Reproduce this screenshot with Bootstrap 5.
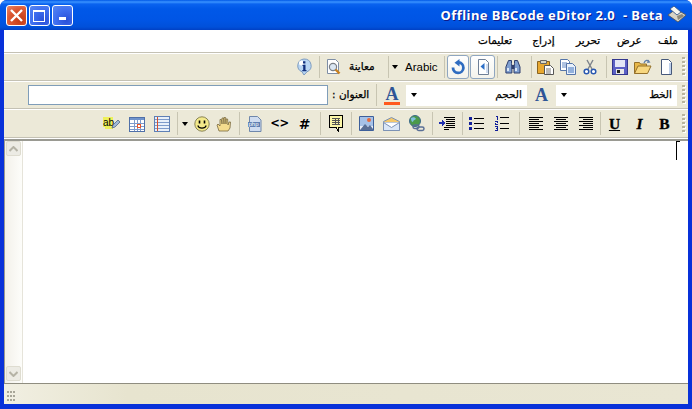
<!DOCTYPE html>
<html lang="ar">
<head>
<meta charset="utf-8">
<title>Offline BBCode eDitor 2.0</title>
<link href="https://cdn.jsdelivr.net/npm/bootstrap@5.3.0/dist/css/bootstrap.min.css" rel="stylesheet">
<style>
html,body{margin:0;height:409px;overflow:hidden;background:#fff}
.xpwin{width:692px;height:409px;direction:ltr;background:#0831d9;border-radius:7px 7px 0 0;overflow:hidden;font-family:"DejaVu Sans",sans-serif;color:#000}
.xptitle{height:30px;padding:0 6px 0 6px;background:linear-gradient(#0058e6 0,#3a93ff 2px,#0a63ef 4px,#0058e8 9px,#0055e5 20px,#0050da 27px,#0040c4 30px)}
.xpbtn{width:21px;height:21px;border:1px solid #fff;border-radius:3px;margin-right:2px;background:radial-gradient(circle at 70% 75%,#2a50d8,#3f6ff0 55%,#5a88f0)}
.xpbtn.xclose{background:radial-gradient(circle at 70% 75%,#c33a14,#dd5a35 60%,#e88b6c)}
.xpname{font:bold 13px "Noto Sans",sans-serif;color:#fff;text-shadow:1px 1px 0 #0f1b89;white-space:pre;margin-right:5px;letter-spacing:.45px}
.xpbody{margin:0 4px 0 4px;height:374px;background:#ece9d8}
.xpmenu{height:23px;background:#fff;border-bottom:1px solid #c4c1b4;padding-right:10px;font-size:10.5px;font-weight:400;-webkit-text-stroke:.25px #000;direction:ltr}
.mi1{width:46px;text-align:center}.mi2{width:51px;text-align:center}.mi3{width:38px;text-align:center}.mi4{width:45px;text-align:center}.mi5{width:26px;text-align:right}
.xptool{height:28px;background:#ece9d8;border-top:1px solid #fff;border-bottom:1px solid #c4c1b4}
.xptool.tall{height:29px}
.cell{flex:none;height:100%}
.w10{width:10px}.w14{width:12px}.w21{width:21px}.w22{width:22px}.w23{width:23px}.w24{width:24px}.w25{width:25px}.w28{width:28px}.w29{width:29px}
.sepc{flex:none;align-self:stretch;position:relative}
.sepc::before{content:"";position:absolute;top:2px;bottom:2px;left:50%;width:1px;background:#c8c5b2}
.s4{width:4px}.s5{width:5px}.s6{width:6px}.s7{width:7px}.s9{width:9px}
.grip{flex:none;width:11px;height:100%;padding-left:5px}
.grip i{display:block;width:3px;height:2px;margin-bottom:2px;background:#b8b49e;box-shadow:1px 1px 0 #fff}
.tri{width:0;height:0;border:3.5px solid transparent;border-top:4px solid #000;border-bottom:0}
.hotb{flex:none;height:24px;border:1px solid #8fa6c0;border-radius:3px;background:linear-gradient(#fff,#f4f3ec)}
.hw1{width:22px;margin-left:1px}.hw2{width:25px;margin-left:1px}
.prevb{width:64px;padding-left:4px;gap:6px}
.lbl{font-size:10.5px;-webkit-text-stroke:.25px #000;white-space:nowrap}
.arab{width:41px;padding-left:5px;font:11.5px "Liberation Sans",sans-serif}
.inpt{flex:none;width:300px;height:20px;border:1px solid #7f9db9;background:#fff;margin-right:2px}
.lblw{width:44px;padding-left:2px}
.ddn{flex:none;height:21px;background:#fff;padding:0 5px}
.ddw{width:121px}
.tletter{font:bold 18px/1 "Liberation Serif",serif;color:#2f5596}
.colorbar{width:16px;height:3px;background:#ff5a1f;margin-top:-1px}
.biu{font:bold 15.5px/1 "Liberation Serif",serif;-webkit-text-stroke:.3px #000}
.code{font:bold 14px/1 "DejaVu Sans",sans-serif;text-shadow:0 0 2px #fff}
.codeb{font:bold 11.5px/1 "DejaVu Sans",sans-serif;letter-spacing:-.5px;text-shadow:0 0 2px #fff}
.xpedit{height:245px;border-top:1px solid #fff;background:#fff}
.edinner{height:100%;border-top:2px solid #9a9a92;border-left:1px solid #9a9a92;border-bottom:0}
.sbar{flex:none;width:18px;height:100%;background:linear-gradient(90deg,#f3f1ea,#fdfdfa);border-right:1px solid #e6e4da;padding:0 1px 2px}
.sbtn{width:15px;height:15px;background:#ecebe4;border:1px solid #dedcd0;border-radius:2px}
.pane{flex:1;padding:0 9px 0 0}
.caretx{width:3px;height:19px;border-left:1.5px solid #000;position:relative}
.caretx::before{content:"";position:absolute;left:0;top:0;width:3px;height:1px;background:#000}
.xpstat{height:21px;border-top:1px solid #8f8d80;background:linear-gradient(90deg,#f1efe2,#e7e4cf 18%,#e9e6d3);padding:7px 0 0 3px}
.dots{width:9px;height:11px;background:radial-gradient(circle at 1px 1px,#a8a698 1px,transparent 1.2px) 0 0/3px 4px}
svg{display:block}
</style>
</head>
<body>
<div class="xpwin d-flex flex-column">
  <div class="xptitle d-flex align-items-center">
    <div class="xpbtn xclose d-flex align-items-center justify-content-center"><svg width="15" height="15" viewBox="0 0 15 15"><path d="M2 2l11 11M13 2L2 13" stroke="#fff" stroke-width="2.4"/></svg></div>
    <div class="xpbtn d-flex align-items-center justify-content-center"><svg width="13" height="13" viewBox="0 0 13 13" shape-rendering="crispEdges"><path d="M.5 2.5h11v10H.5z" fill="none" stroke="#fff"/><path d="M0 .5h12v2H0z" fill="#fff"/></svg></div>
    <div class="xpbtn d-flex align-items-end justify-content-center pb-1"><svg width="8" height="4" viewBox="0 0 8 4"><path d="M0 0h7v3H0z" fill="#fff"/></svg></div>
    <div class="flex-grow-1"></div>
    <span class="xpname">Offline BBCode eDitor 2.0  - Beta</span>
    <svg width="18" height="18" viewBox="0 0 18 18"><path d="M0 9l8-6 10 6-8 7z" fill="#d8d4c6" stroke="#55524a" stroke-width=".8"/><path d="M2 3l4-3 7 6-4 3z" fill="#f6f6f0" stroke="#34568a" stroke-width=".9"/><path d="M9 10l5-2 2 2-6 4z" fill="#8c8878"/></svg>
  </div>
  <div class="xpbody">
    <div class="xpmenu d-flex align-items-center justify-content-end">
      <span class="mi1">تعليمات</span><span class="mi2">إدراج</span><span class="mi3">تحرير</span><span class="mi4">عرض</span><span class="mi5">ملف</span>
    </div>

    <div class="xptool d-flex justify-content-end align-items-center">
      <div class="cell w24 d-flex align-items-center justify-content-center"><svg width="18" height="18" viewBox="0 0 18 18"><path d="M9 1a7 6.7 0 0 1 3 12.800L9 17l-2-3.200A7 6.700 0 0 1 9 1z" fill="#b9d6f3" stroke="#7e9cc0"/><circle cx="6.500" cy="5" r="2.500" fill="#fff"/><path d="M8 3.200h2.400v2.200H8zM7.500 6.800h3V12H11.500v1.200H7.300V12h.9V8h-.7z" fill="#12307d"/></svg></div>
      <div class="sepc s5"></div>
      <div class="cell prevb d-flex align-items-center"><svg width="18" height="18" viewBox="0 0 18 18"><path d="M2.500 1.500h8l3 3v11h-11z" fill="#fff" stroke="#7e8ea5"/><circle cx="8" cy="9" r="3.600" fill="#dbe7f3" stroke="#7a7f86" stroke-width="1.200"/><path d="M10.500 11.500l4 4" stroke="#c9801f" stroke-width="2.400"/></svg><span class="lbl">معاينة</span></div>
      <div class="sepc s5"></div>
      <div class="cell w10 d-flex align-items-center justify-content-center"><div class="tri"></div></div>
      <div class="cell arab d-flex align-items-center">Arabic</div>
      <div class="sepc s5"></div>
      <div class="hotb hw1 d-flex align-items-center justify-content-center"><svg width="16" height="16" viewBox="0 0 16 16"><path d="M3 8.500A5.200 5.200 0 1 0 8.500 3.500" fill="none" stroke="#2f6cc0" stroke-width="2.800"/><path d="M9.500 0v7.500L4.500 3.700z" fill="#2f6cc0"/></svg></div>
      <div class="hotb hw2 d-flex align-items-center justify-content-center"><svg width="16" height="16" viewBox="0 0 16 16"><path d="M3.500 .5h7l3 3v12h-10z" fill="#fff" stroke="#6e7f96"/><path d="M11 5h2v9h-2z" fill="#cfdcef"/><path d="M9.500 4v7L5.500 7.500z" fill="#2d70c8"/></svg></div>
      <div class="sepc s4"></div>
      <div class="cell w28 d-flex align-items-center justify-content-center"><svg width="16" height="16" viewBox="0 0 16 16"><path d="M3.500 1.500h3v3l.4 3V14h-6V8z M9.500 1.500h3l2.500 6.500v6H9V7.500l.5-3z" fill="#7f9fd0" stroke="#2e3f6e"/><path d="M6.500 6h3v4h-3z" fill="#2e3f6e"/><path d="M2 9h2v3H2zM10 9h2v3h-2z" fill="#dbe7f5"/></svg></div>
      <div class="sepc s7"></div>
      <div class="cell w23 d-flex align-items-center justify-content-center"><svg width="18" height="17" viewBox="0 0 18 17"><path d="M.5 2.500h12v12H.5z" fill="#e8a830" stroke="#8a6420"/><path d="M3.500 1.500h6v3h-6z" fill="#d8d8c8" stroke="#666"/><path d="M7.500 6.500h6l3 3v6h-9z" fill="#fff" stroke="#555"/><path d="M9 10h5M9 12h5M9 14h5" stroke="#777"/></svg></div>
      <div class="cell w21 d-flex align-items-center justify-content-center"><svg width="16" height="16" viewBox="0 0 16 16"><path d="M.5 .5h7l2 2v9h-9z" fill="#fff" stroke="#5574a8"/><path d="M2 4h5M2 6h5M2 8h5" stroke="#5f86c5"/><path d="M6.500 4.500h6l3 3v8h-9z" fill="#e9f1fb" stroke="#5574a8"/><path d="M8 9h6M8 11h6M8 13h6" stroke="#3d70bd"/></svg></div>
      <div class="cell w24 d-flex align-items-center justify-content-center"><svg width="16" height="16" viewBox="0 0 16 16"><path d="M5 1l5 9M11 1L6 10" stroke="#7d828a" stroke-width="1.400" fill="none"/><circle cx="4.500" cy="12.500" r="2.300" fill="#fff" stroke="#2a58b0" stroke-width="1.500"/><circle cx="11.500" cy="12.500" r="2.300" fill="#fff" stroke="#2a58b0" stroke-width="1.500"/></svg></div>
      <div class="sepc s7"></div>
      <div class="cell w22 d-flex align-items-center justify-content-center"><svg width="16" height="16" viewBox="0 0 16 16" shape-rendering="crispEdges"><path d="M.5 .5h15v15H.5z" fill="#5b60c4" stroke="#34378e"/><path d="M3 1h10v7H3z" fill="#e3e6f6"/><path d="M4 10h8v5H4z" fill="#e8e8e8"/><path d="M5 11h3v3H5z" fill="#222"/></svg></div>
      <div class="cell w24 d-flex align-items-center justify-content-center"><svg width="18" height="16" viewBox="0 0 18 16"><path d="M.5 14.500v-11h5l1 1.500h6v2.500" fill="#e8b84a" stroke="#94702a"/><path d="M.5 14.500L4 7h13l-3.500 7.500z" fill="#f7d77f" stroke="#94702a"/><path d="M10 4c1-3 4-3.500 5-1.500" fill="none" stroke="#5f7da8" stroke-width="1.200"/><path d="M14 .5l2.500 3-3.500.5z" fill="#5f7da8"/></svg></div>
      <div class="cell w22 d-flex align-items-center justify-content-center"><svg width="16" height="16" viewBox="0 0 16 16"><path d="M3.500 .5h7l3 3v12h-10z" fill="#fff" stroke="#46587a"/><path d="M11 4h2v11h-2z" fill="#bfd0ea"/></svg></div>
      <div class="grip d-flex flex-column justify-content-center"><i></i><i></i><i></i><i></i><i></i></div>
    </div>

    <div class="xptool d-flex justify-content-end align-items-center">
      <div class="inpt"></div>
      <div class="cell lblw d-flex align-items-center"><span class="lbl" dir="rtl">العنوان :</span></div>
      <div class="sepc s4"></div>
      <div class="cell w28 d-flex flex-column align-items-center justify-content-center"><span class="tletter">A</span><div class="colorbar"></div></div>
      <div class="ddn ddw d-flex align-items-center justify-content-between"><div class="tri"></div><span class="lbl">الحجم</span></div>
      <div class="cell w29 d-flex align-items-center justify-content-center"><span class="tletter">A</span></div>
      <div class="ddn ddw d-flex align-items-center justify-content-between"><div class="tri"></div><span class="lbl">الخط</span></div>
      <div class="grip d-flex flex-column justify-content-center"><i></i><i></i><i></i><i></i><i></i></div>
    </div>

    <div class="xptool tall d-flex justify-content-end align-items-center">
      <div class="cell w25 d-flex align-items-center justify-content-center"><svg width="17" height="16" viewBox="0 0 17 16"><path d="M0 1h10v12H2V11H0z" fill="#eef05a"/><text x="0" y="10" font-family="Liberation Sans" font-size="10">ab</text><path d="M9 12l1-3 5-5 2 2-5 5z" fill="#9fb8d8" stroke="#445a7a" stroke-width=".7"/></svg></div>
      <div class="cell w25 d-flex align-items-center justify-content-center"><svg width="16" height="16" viewBox="0 0 16 16" shape-rendering="crispEdges"><path d="M.5 1.500h15v14H.5z" fill="#fff" stroke="#5070a8"/><path d="M1 2h14v2H1z" fill="#6f93cc"/><path d="M1 7h14M1 10h14M1 13h14M5 4v11M8 4v11M11 4v11" stroke="#7d9bcb"/><path d="M8.500 8.500h3v3h-3z" fill="#fff" stroke="#e8562a"/></svg></div>
      <div class="cell w25 d-flex align-items-center justify-content-center"><svg width="16" height="16" viewBox="0 0 16 16" shape-rendering="crispEdges"><path d="M.5 .5h15v15H.5z" fill="#e8f0fa" stroke="#5f80b5"/><path d="M1 3h14M1 6h14M1 9h14M1 12h14" stroke="#7d9bcb"/><path d="M3.500 1v14" stroke="#d8502a"/></svg></div>
      <div class="sepc s5"></div>
      <div class="cell w14 d-flex align-items-center justify-content-center"><div class="tri"></div></div>
      <div class="cell w22 d-flex align-items-center justify-content-center"><svg width="16" height="16" viewBox="0 0 16 16"><circle cx="8" cy="8" r="7.200" fill="#f3e98a" stroke="#8a8558"/><path d="M5.500 4.500v3M10.500 4.500v3" stroke="#000" stroke-width="1.600"/><path d="M3.800 9.500c1 3.500 7.400 3.500 8.400 0" fill="none" stroke="#000" stroke-width="1.100"/></svg></div>
      <div class="cell w22 d-flex align-items-center justify-content-center"><svg width="16" height="16" viewBox="0 0 16 16"><path d="M3 15L1 9l1-1 2 2V3.500h1.400L6 8V2h1.600L8 8V1.500h1.600L10 8V3h1.600l.4 6 1-3h1.500L14 12l-2 3z" fill="#f5dc8e" stroke="#7a6a40" stroke-width=".8"/></svg></div>
      <div class="sepc s7"></div>
      <div class="cell w25 d-flex align-items-center justify-content-center"><svg width="14" height="16" viewBox="0 0 14 16"><path d="M1.500 .5h8l3.500 3.500v11.500h-11.500z" fill="#cfdcf0" stroke="#6f87ab"/><path d="M0 6h12v5H0z" fill="#5f7fb3"/><text x="0.500" y="10.300" font-family="Liberation Sans" font-size="6" fill="#fff">php</text></svg></div>
      <div class="cell w25 d-flex align-items-center justify-content-center"><span class="codeb">&lt;&gt;</span></div>
      <div class="cell w25 d-flex align-items-center justify-content-center"><span class="code">#</span></div>
      <div class="sepc s6"></div>
      <div class="cell w25 d-flex align-items-center justify-content-center"><svg width="14" height="17" viewBox="0 0 14 17" shape-rendering="crispEdges"><path d="M.5 .5h13v12H9v3l-2-3H.5z" fill="#fbf6a8" stroke="#000"/><path d="M3 3h8M3 5h8M3 7h8M3 9h8M6 3v7M9 3v7" stroke="#555"/></svg></div>
      <div class="sepc s6"></div>
      <div class="cell w25 d-flex align-items-center justify-content-center"><svg width="15" height="15" viewBox="0 0 15 15"><path d="M.5 .5h14v14H.5z" fill="#e9eef8" stroke="#3d5f9a"/><path d="M1 1h13v9H1z" fill="#a7c2e8"/><path d="M1 14l5-6 3 3 2-2 3 4v1z" fill="#5a6f96"/><circle cx="10" cy="4" r="2" fill="#e86a3a"/></svg></div>
      <div class="cell w25 d-flex align-items-center justify-content-center"><svg width="17" height="14" viewBox="0 0 17 14"><path d="M.5 4.500L8.500 .5l8 4v9h-16z" fill="#f5c86a" stroke="#7c92b5"/><path d="M.5 5.500h16v8h-16z" fill="#dbe7f7" stroke="#7c92b5"/><path d="M.5 5.500l8 5 8-5" fill="#fff" stroke="#7c92b5"/></svg></div>
      <div class="cell w25 d-flex align-items-center justify-content-center"><svg width="17" height="17" viewBox="0 0 17 17"><circle cx="7" cy="6" r="5.500" fill="#4b9a4a" stroke="#3a6a8a"/><path d="M3 3c2-1 4-1 5 1-1 1-3 1-3 3-1 0-2-1-2-4z" fill="#7ec0e0"/><rect x="5" y="10" width="6" height="3.500" rx="1.700" fill="none" stroke="#5a6f96" stroke-width="1.500"/><rect x="9" y="12" width="7" height="3.500" rx="1.700" fill="none" stroke="#5a6f96" stroke-width="1.500"/></svg></div>
      <div class="sepc s5"></div>
      <div class="cell w25 d-flex align-items-center justify-content-center"><svg width="16" height="14" viewBox="0 0 16 14" shape-rendering="crispEdges"><path d="M5 .5h11M7 2.500h9M7 4.500h9M7 6.500h9M7 8.500h9M5 10.500h11M5 12.500h5" stroke="#000"/><path d="M0 5h3V3l3 3-3 3V7H0z" fill="#2030b0"/></svg></div>
      <div class="sepc s5"></div>
      <div class="cell w25 d-flex align-items-center justify-content-center"><svg width="15" height="14" viewBox="0 0 15 14" shape-rendering="crispEdges"><path d="M0 0h3v3H0zM0 5h3v3H0zM0 10h3v3H0z" fill="#12209a"/><path d="M5 1.500h10M5 6.500h10M5 11.500h10" stroke="#000"/></svg></div>
      <div class="cell w25 d-flex align-items-center justify-content-center"><svg width="14" height="15" viewBox="0 0 14 15" shape-rendering="crispEdges"><path d="M1 0h2v4H2V1H1zM0 5h3v2H1v1h2v1H0V7h2V6H0zM0 10h3v5H0v-1h2v-1H1v-1h1v-1H0z" fill="#12209a"/><path d="M5 1.500h9M5 7.500h9M5 12.500h9" stroke="#000"/></svg></div>
      <div class="sepc s9"></div>
      <div class="cell w25 d-flex align-items-center justify-content-center"><svg width="14" height="13" viewBox="0 0 14 13" shape-rendering="crispEdges"><path d="M0 .5h14M0 2.500h10M0 4.500h14M0 6.500h10M0 8.500h14M0 10.500h10M0 12.500h14" stroke="#000"/></svg></div>
      <div class="cell w25 d-flex align-items-center justify-content-center"><svg width="14" height="13" viewBox="0 0 14 13" shape-rendering="crispEdges"><path d="M0 .5h14M2 2.500h10M0 4.500h14M2 6.500h10M0 8.500h14M2 10.500h10M0 12.500h14" stroke="#000"/></svg></div>
      <div class="cell w25 d-flex align-items-center justify-content-center"><svg width="14" height="13" viewBox="0 0 14 13" shape-rendering="crispEdges"><path d="M0 .5h14M4 2.500h10M0 4.500h14M4 6.500h10M0 8.500h14M4 10.500h10M0 12.500h14" stroke="#000"/></svg></div>
      <div class="sepc s4"></div>
      <div class="cell w25 d-flex align-items-center justify-content-center"><span class="biu text-decoration-underline">U</span></div>
      <div class="cell w25 d-flex align-items-center justify-content-center"><span class="biu fst-italic">I</span></div>
      <div class="cell w25 d-flex align-items-center justify-content-center"><span class="biu">B</span></div>
      <div class="grip d-flex flex-column justify-content-center"><i></i><i></i><i></i><i></i><i></i></div>
    </div>

    <div class="xpedit">
      <div class="edinner d-flex">
        <div class="sbar d-flex flex-column justify-content-between">
          <div class="sbtn d-flex align-items-center justify-content-center"><svg width="9" height="6" viewBox="0 0 9 6"><path d="M.5 5l4-4 4 4" fill="none" stroke="#b5b3a6" stroke-width="2"/></svg></div>
          <div class="sbtn d-flex align-items-center justify-content-center"><svg width="9" height="6" viewBox="0 0 9 6"><path d="M.5 1l4 4 4-4" fill="none" stroke="#b5b3a6" stroke-width="2"/></svg></div>
        </div>
        <div class="pane d-flex justify-content-end"><div class="caretx"></div></div>
      </div>
    </div>
    <div class="xpstat"><div class="dots"></div></div>
  </div>
</div>
<script src="https://cdn.jsdelivr.net/npm/bootstrap@5.3.0/dist/js/bootstrap.bundle.min.js"></script>
</body>
</html>
